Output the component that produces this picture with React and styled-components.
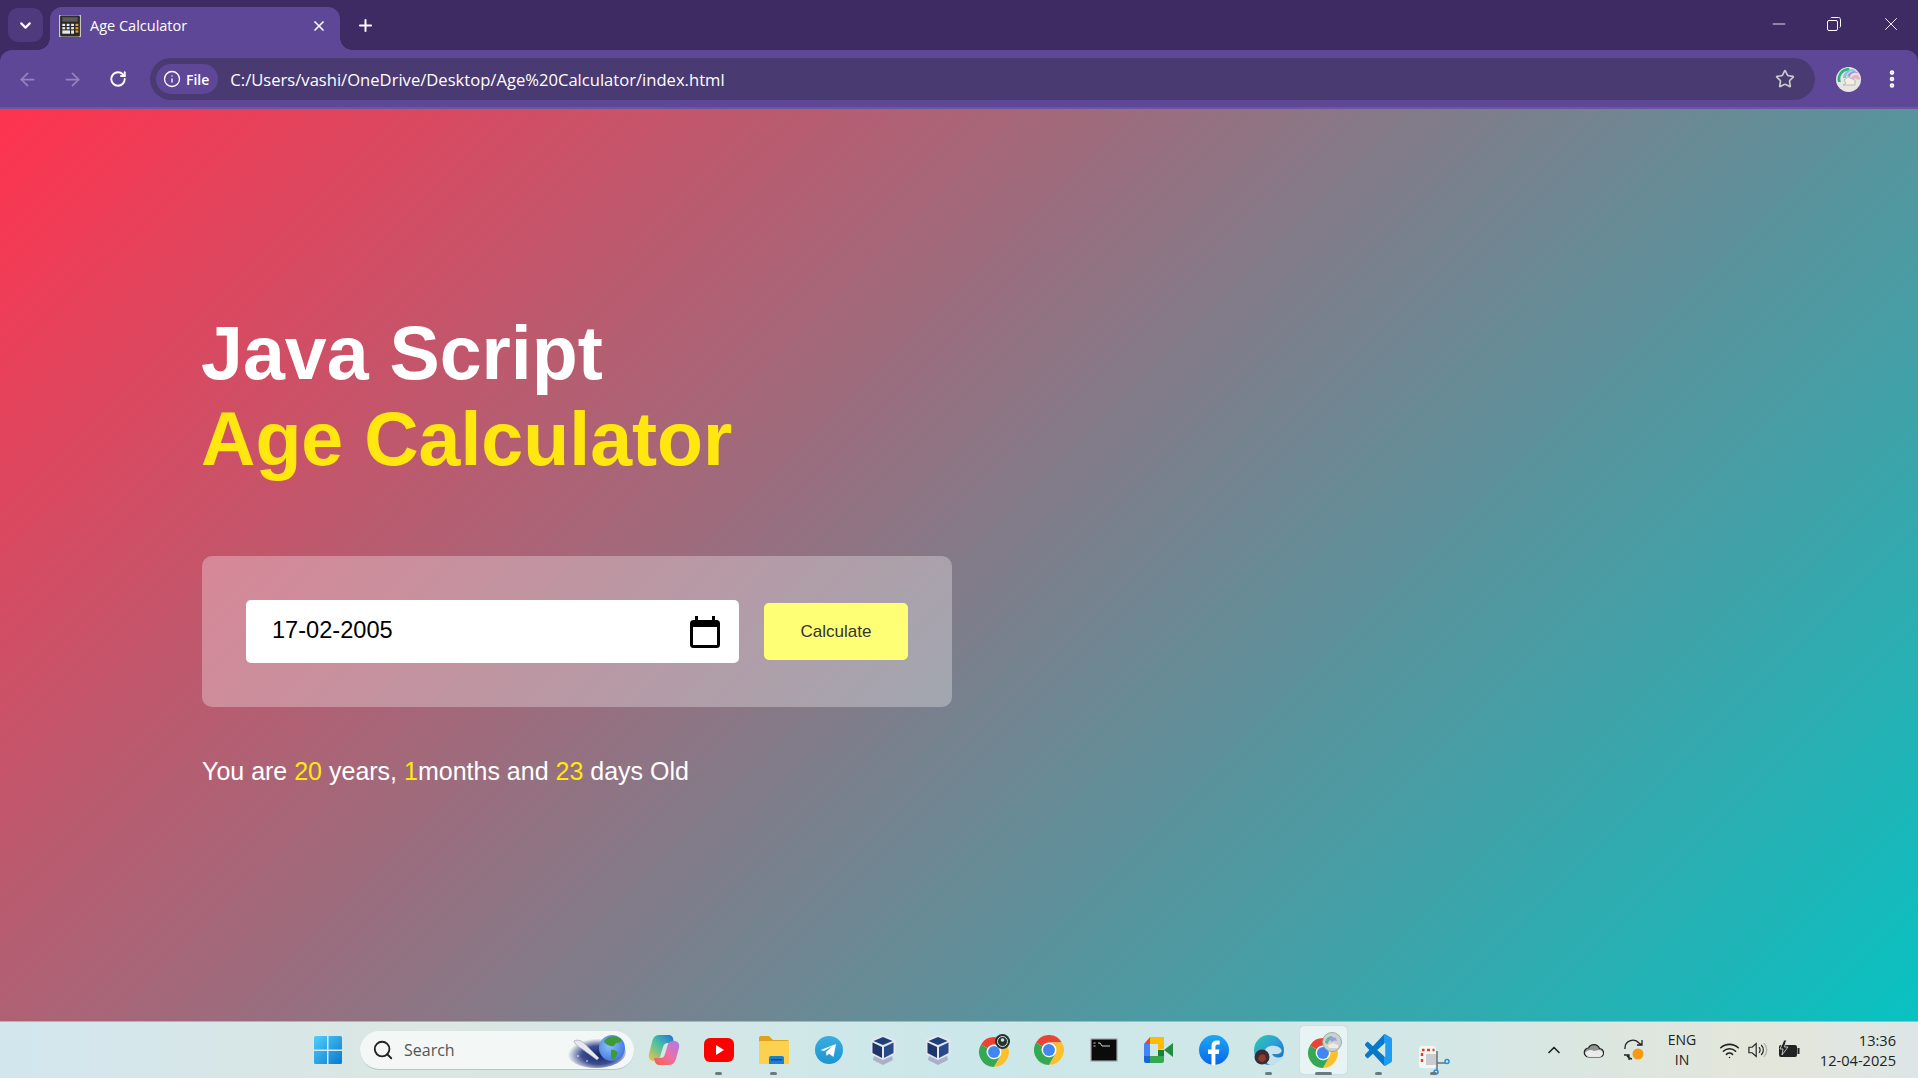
import styled, { createGlobalStyle } from "styled-components";
import {
  ArrowLeft,
  ArrowRight,
  ChevronDown,
  ChevronUp,
  EllipsisVertical,
  Info,
  Minus,
  Plus,
  RotateCw,
  Search,
  Star,
  Wifi,
  X,
} from "lucide-react";

const frame = "#3e2b63";
const toolbar = "#5f4798";

const GlobalStyle = createGlobalStyle`
  html, body {
    margin: 0;
    padding: 0;
    height: 100%;
    overflow: hidden;
  }
  * {
    box-sizing: border-box;
  }
`;

const Screen = styled.div`
  display: flex;
  flex-direction: column;
  height: 100vh;
  background: ${frame};
  font-family: "Liberation Sans", Arial, sans-serif;
`;

const TabStrip = styled.div`
  display: flex;
  align-items: flex-end;
  height: 50px;
  flex-shrink: 0;
  color: #fff;
  font-family: "Open Sans", "Noto Sans", sans-serif;
`;

const TabSearch = styled.div`
  display: flex;
  align-items: center;
  justify-content: center;
  width: 35px;
  height: 34px;
  margin: 0 7px 8px 8px;
  border-radius: 10px;
  background: #4f3a7e;
`;

const Tab = styled.div`
  position: relative;
  display: flex;
  align-items: center;
  width: 290px;
  height: 43px;
  padding: 0 13px 6px 9px;
  border-radius: 12px 12px 0 0;
  background: ${toolbar};
  font-size: 14.5px;

  &::before,
  &::after {
    content: "";
    position: absolute;
    bottom: 0;
    width: 12px;
    height: 12px;
  }
  &::before {
    left: -12px;
    background: radial-gradient(circle at 0 0, transparent 11.5px, ${toolbar} 12px);
  }
  &::after {
    right: -12px;
    background: radial-gradient(circle at 100% 0, transparent 11.5px, ${toolbar} 12px);
  }
`;

const TabTitle = styled.span`
  flex: 1;
  margin-left: 9px;
`;

const NewTab = styled.div`
  display: flex;
  align-items: center;
  margin: 0 0 10px 16px;
  height: 30px;
`;

const WindowControls = styled.div`
  display: flex;
  align-items: center;
  margin-left: auto;
  height: 50px;
  padding-bottom: 2px;
`;

const WindowButton = styled.div`
  display: flex;
  align-items: center;
  justify-content: center;
  width: ${(p) => p.$w}px;
`;

const Toolbar = styled.div`
  display: flex;
  align-items: center;
  height: 59px;
  flex-shrink: 0;
  padding: 1px 0 0;
  background: ${toolbar};
  border-bottom: 2px solid #6b569f;
  border-radius: 12px 12px 0 0;
  color: #fff;
  font-family: "Open Sans", "Noto Sans", sans-serif;
`;

const NavButton = styled.div`
  display: flex;
  align-items: center;
  justify-content: center;
  width: ${(p) => p.$w}px;
  color: ${(p) => (p.$dim ? "#9384bb" : "#fff")};
`;

const Omnibox = styled.div`
  display: flex;
  align-items: center;
  width: 1665px;
  height: 42px;
  margin-left: 4px;
  padding: 0 20px 0 6px;
  border-radius: 21px;
  background: #4a3a72;
  font-size: 16.6px;
`;

const SiteChip = styled.div`
  display: flex;
  align-items: center;
  gap: 5px;
  height: 30px;
  padding: 0 9px 0 7px;
  border-radius: 15px;
  background: ${toolbar};
  font-size: 14px;
  font-weight: 600;
`;

const Url = styled.span`
  flex: 1;
  margin-left: 12px;
`;

const Avatar = styled.div`
  display: flex;
  margin-left: 21px;
  width: 25px;
  height: 25px;
`;

const Menu = styled.div`
  display: flex;
  margin-left: 20px;
`;

const Page = styled.main`
  flex: 1;
  padding: 201px 0 0 202px;
  background: linear-gradient(135deg, #ff334f, #08c2c2);
`;

const Heading = styled.h1`
  margin: 0 0 74px -1px;
  font-size: 75.3px;
  line-height: 86px;
  font-weight: 700;
  color: #fff;
`;

const HeadingAccent = styled.span`
  display: block;
  color: #ffe70f;
`;

const Card = styled.div`
  display: flex;
  align-items: center;
  justify-content: space-between;
  width: 750px;
  height: 151px;
  padding: 0 44px;
  border-radius: 10px;
  background: rgba(255, 255, 255, 0.3);
`;

const DateField = styled.div`
  display: flex;
  align-items: center;
  width: 493px;
  height: 63px;
  padding: 0 19px 0 26px;
  border-radius: 5px;
  background: #fff;
`;

const DateInput = styled.input`
  flex: 1;
  min-width: 0;
  border: 0;
  outline: 0;
  padding: 0 0 3px;
  background: transparent;
  color: #000;
  font-family: inherit;
  font-size: 23.6px;
`;

const CalcButton = styled.button`
  width: 144px;
  height: 57px;
  border: 0;
  border-radius: 5px;
  background: #ffff76;
  color: #333;
  font-family: inherit;
  font-size: 17px;
`;

const Result = styled.p`
  margin: 49px 0 0;
  font-size: 25px;
  line-height: 30px;
  color: #fff;
`;

const Num = styled.span`
  color: #ffe70f;
`;

const Taskbar = styled.footer`
  display: flex;
  align-items: center;
  height: 57px;
  flex-shrink: 0;
  padding-left: 300px;
  border-top: 1px solid #a9b6b8;
  background: linear-gradient(90deg, #d2e6ee 0%, #dbe7e2 22%, #cce7ea 50%, #d3e7e6 75%, #e4e6da 92%, #dde6e6 100%);
`;

const TaskItem = styled.div`
  position: relative;
  display: flex;
  align-items: center;
  justify-content: center;
  width: 55px;
  height: 48px;

  ${(p) =>
    p.$active &&
    `
    &::before {
      content: "";
      position: absolute;
      left: 4px;
      right: 4px;
      top: 0;
      bottom: 0;
      border-radius: 4px;
      background: rgba(255, 255, 255, 0.5);
      box-shadow: 0 0 1px rgba(0, 0, 0, 0.25);
    }
  `}

  svg {
    position: relative;
  }
`;

const Indicator = styled.span`
  position: absolute;
  left: 50%;
  bottom: -1px;
  width: ${(p) => (p.$active ? 17 : 7)}px;
  height: 3px;
  margin-left: ${(p) => (p.$active ? -8.5 : -3.5)}px;
  border-radius: 2px;
  background: #6b7a82;
`;

const SearchBox = styled.div`
  display: flex;
  align-items: center;
  width: 274px;
  height: 39px;
  margin: 0 2px 0 5px;
  padding: 0 4px 0 12px;
  border-radius: 20px;
  border-bottom: 1px solid #b9c4c4;
  background: #f3f7f5;
  color: #555;
  font-family: "Open Sans", "Noto Sans", sans-serif;
  font-size: 16px;
`;

const SearchLabel = styled.span`
  flex: 1;
  margin-left: 10px;
`;

const Tray = styled.div`
  display: flex;
  align-items: center;
  margin-left: auto;
  padding-right: 22px;
  color: #222;
  font-family: "Open Sans", "Noto Sans", sans-serif;
  font-size: 14px;
`;

const TrayBox = styled.div`
  display: flex;
  align-items: center;
  justify-content: center;
  width: ${(p) => p.$w}px;
`;

const Lang = styled.div`
  width: 56px;
  text-align: center;
  line-height: 20px;
`;

const Clock = styled.div`
  width: 86px;
  text-align: right;
  font-size: 14.6px;
  line-height: 20px;
  white-space: nowrap;
`;

const CalculatorFavicon = () => (
  <svg width="22" height="22" viewBox="0 0 20 20">
    <rect width="20" height="20" fill="#c9c5c0" />
    <rect x="1" y="0.5" width="18" height="19" rx="1" fill="#2a2a2a" />
    <rect x="3" y="2" width="14" height="4" fill="#5b5b5b" />
    {[3, 7, 11].map((x) =>
      [8, 11].map((y) => <rect key={`${x}-${y}`} x={x} y={y} width="2.6" height="2" fill="#e8e8e8" />)
    )}
    <rect x="3" y="14" width="7" height="3" fill="#e8e8e8" />
    <rect x="11" y="14" width="2.6" height="3" fill="#e8e8e8" />
    {[8, 11, 14].map((y) => (
      <rect key={y} x="15" y={y} width="2.6" height="2" fill="#f09a1a" />
    ))}
  </svg>
);

const CalendarIcon = () => (
  <svg width="30" height="32" viewBox="0 0 30 32">
    <path d="M5 0h3v4h14V0h3v4h1.500a3.500 3.500 0 0 1 3.500 3.500v21a3.500 3.500 0 0 1-3.500 3.500h-23A3.500 3.500 0 0 1 0 28.500v-21A3.500 3.500 0 0 1 3.500 4H5z" fill="#000" />
    <rect x="3" y="11" width="24" height="18" fill="#fff" />
  </svg>
);

const RestoreIcon = () => (
  <svg width="14" height="14" viewBox="0 0 14 14" fill="none" stroke="#fff" strokeWidth="1">
    <rect x="0.500" y="3.500" width="10" height="10" rx="1.500" />
    <path d="M3.500 1.200c.3-.5.7-.7 1.200-.7h6.800c1.100 0 2 .9 2 2v6.800c0 .5-.2.900-.7 1.200" />
  </svg>
);

const ProfileAvatar = ({ size = 25 }) => (
  <svg width={size} height={size} viewBox="0 0 25 25">
    <circle cx="12.500" cy="12.500" r="12.500" fill="#e8e6e2" />
    <path d="M2 15A11 11 0 0 1 13 1l1 3A8 8 0 0 0 5 15z" fill="#2fb57c" />
    <path d="M7 11A9 9 0 0 1 18 2.500l2 2A7 7 0 0 0 10 11z" fill="#83c4e0" />
    <path d="M11 9A7 7 0 0 1 21 5l2 3a5 5 0 0 0-9 2z" fill="#a59ade" />
    <path d="M15 11a5 5 0 0 1 8-2l1.500 3.500H21a3 3 0 0 0-5 1z" fill="#e5b5c4" />
    <path d="M8 13l4-3 7 3v5H7l3-2z" fill="#f3efe6" stroke="#a8a49c" strokeWidth="0.700" />
  </svg>
);

const WindowsIcon = () => (
  <svg width="30" height="30" viewBox="0 0 30 30">
    <defs>
      <linearGradient id="win" x1="0" y1="0" x2="1" y2="1">
        <stop offset="0" stopColor="#4fd0fb" />
        <stop offset="1" stopColor="#0a78cf" />
      </linearGradient>
    </defs>
    <path d="M1 2.500A1.500 1.500 0 0 1 2.500 1H14v13.500H1zM15.500 1H27.500A1.500 1.500 0 0 1 29 2.500V14.500H15.500zM1 16H14v13H2.500A1.500 1.500 0 0 1 1 27.500zM15.500 16H29v11.500a1.500 1.500 0 0 1-1.500 1.500H15.500z" fill="url(#win)" />
  </svg>
);

const SpaceBadge = () => (
  <svg width="64" height="36" viewBox="0 0 64 36">
    <defs>
      <radialGradient id="space" cx="0.550" cy="0.600" r="0.520">
        <stop offset="0" stopColor="#16286a" />
        <stop offset="0.550" stopColor="#3c4c90" />
        <stop offset="1" stopColor="#f3f7f5" />
      </radialGradient>
      <radialGradient id="globe" cx="0.400" cy="0.400" r="0.700">
        <stop offset="0" stopColor="#8cc4f8" />
        <stop offset="1" stopColor="#3b6fe0" />
      </radialGradient>
    </defs>
    <ellipse cx="30" cy="20" rx="30" ry="16" fill="url(#space)" />
    <path d="M8 9c4-2 8 0 11 3l14 14-2 2-15-11c-4-2-7-5-8-8z" fill="#e6e8ee" stroke="#8f96ad" strokeWidth="0.600" />
    <circle cx="12" cy="24" r="0.800" fill="#fff" />
    <circle cx="21" cy="29" r="0.800" fill="#fff" />
    <circle cx="46" cy="16" r="13" fill="url(#globe)" />
    <path d="M41 6c4-3 11-2 14 1 1 3-2 4-5 4l-2 3c-3 1-7-1-9-3s0-3 2-5zM45 18c3-1 6 1 7 3l-4 7c-2 0-3-2-3-5z" fill="#3f9a3a" />
  </svg>
);

const CopilotIcon = () => (
  <svg width="32" height="32" viewBox="0 0 32 32">
    <defs>
      <linearGradient id="cpA" x1="0" y1="1" x2="1" y2="0">
        <stop offset="0" stopColor="#f5c343" />
        <stop offset="0.500" stopColor="#4cc2a0" />
        <stop offset="1" stopColor="#1f6fe0" />
      </linearGradient>
      <linearGradient id="cpB" x1="0" y1="1" x2="1" y2="0">
        <stop offset="0" stopColor="#f4613f" />
        <stop offset="0.500" stopColor="#ee6fa8" />
        <stop offset="1" stopColor="#a77ce8" />
      </linearGradient>
    </defs>
    <path d="M11 1h10c2 0 3 1 4 3l1 5h-6c-3 0-4 1-5 4l-3 10c-1 3-3 4-6 4-4 0-6-3-5-7l3-12C5 4 7 1 11 1z" fill="url(#cpA)" />
    <path d="M21 31H11c-2 0-3-1-4-3l-1-4h6c3 0 4-1 5-4l3-10c1-2 3-3 6-3 4 0 6 3 5 7l-3 11c-1 3-3 6-7 6z" fill="url(#cpB)" />
  </svg>
);

const YoutubeIcon = () => (
  <svg width="30" height="24" viewBox="0 0 30 24">
    <rect width="30" height="24" rx="6" fill="#f00" />
    <path d="M12 7l8 5-8 5z" fill="#fff" />
  </svg>
);

const FolderIcon = () => (
  <svg width="30" height="28" viewBox="0 0 30 28">
    <path d="M0 2a2 2 0 0 1 2-2h8l4 4h14a2 2 0 0 1 2 2v4H0z" fill="#dfa21c" />
    <rect y="5" width="30" height="23" rx="1" fill="#fdd04f" />
    <path d="M10 25v-3a2 2 0 0 1 2-2h11a2 2 0 0 1 2 2v6H10z" fill="#1b80cf" />
    <rect x="12" y="23" width="11" height="1.500" fill="#0c4f92" />
  </svg>
);

const TelegramIcon = () => (
  <svg width="28" height="28" viewBox="0 0 28 28">
    <defs>
      <linearGradient id="tg" x1="0" y1="0" x2="0" y2="1">
        <stop offset="0" stopColor="#3aaee2" />
        <stop offset="1" stopColor="#1e94d0" />
      </linearGradient>
    </defs>
    <circle cx="14" cy="14" r="14" fill="url(#tg)" />
    <path d="M5.500 14L21 8l-2.500 13-4.500-3.300-2.400 2.300-.6-4 6.500-6-8.400 5z" fill="#fff" />
  </svg>
);

const VBoxIcon = () => (
  <svg width="26" height="30" viewBox="1 0 26 30">
    <path d="M13 0l12.500 5v14L13 25 .5 19V5z" fill="#e4e8ee" />
    <path d="M13 2l9.500 4-9.500 4-9.500-4z" fill="#1f3f78" />
    <path d="M2.500 7.500l9.500 4.500v11l-9.500-5z" fill="#1d3567" />
    <path d="M23.500 7.500L14 12v11l9.500-5z" fill="#264a8c" />
    <path d="M4 21l9 4 9-4 1 4-10 5-10-5z" fill="#a9b1c9" />
  </svg>
);

const ChromeGlyph = () => (
  <g transform="scale(1.360) translate(-1 -1)">
    <circle cx="12" cy="12" r="11" fill="#fff" />
    <path d="M21.530 6.500A11 11 0 0 0 2.470 6.500L7.240 9.250A5.500 5.500 0 0 1 12 6.500Z" fill="#ea4335" />
    <path d="M12 23A11 11 0 0 0 21.530 6.500H12A5.500 5.500 0 0 1 16.760 14.750Z" fill="#fbc02d" />
    <path d="M2.470 6.500A11 11 0 0 0 12 23L16.760 14.750A5.500 5.500 0 0 1 7.240 9.250Z" fill="#34a853" />
    <circle cx="12" cy="12" r="4.400" fill="#4285f4" />
  </g>
);

const ChromeIcon = () => (
  <svg width="30" height="30" viewBox="0 0 30 30">
    <ChromeGlyph />
  </svg>
);

const ProfileBadge = () => (
  <svg width="34" height="34" viewBox="0 0 34 34">
    <g transform="translate(2 4)">
      <ChromeGlyph />
    </g>
    <circle cx="25.500" cy="8.500" r="7.500" fill="#26332f" />
    <circle cx="25.500" cy="8.500" r="5" fill="none" stroke="#d5e3df" strokeWidth="1" />
    <circle cx="25.500" cy="7" r="1.800" fill="#d5e3df" />
  </svg>
);

const ActiveChrome = () => (
  <svg width="38" height="38" viewBox="0 0 38 38">
    <g transform="translate(3 7)">
      <ChromeGlyph />
    </g>
    <circle cx="27" cy="11" r="9.500" fill="#c9d3d0" stroke="#8f9a98" strokeWidth="0.800" />
    <path d="M20 12a7 7 0 0 1 7-7l1 3a5 5 0 0 0-5 5z" fill="#66b99a" />
    <path d="M24 8a6 6 0 0 1 7-1l1 3a4 4 0 0 0-5 1z" fill="#a59ade" />
    <path d="M23 14l5-2 5 2v3h-9z" fill="#efece5" />
  </svg>
);

const TerminalIcon = () => (
  <svg width="28" height="24" viewBox="0 0 28 24">
    <rect width="28" height="24" rx="1" fill="#b6bcc0" />
    <rect x="1.500" y="1.500" width="25" height="21" fill="#0b0b0b" />
    <path d="M3.500 5h2M3.500 8h2M8 5h2l2 3h8" stroke="#cfd3d6" strokeWidth="1" fill="none" />
  </svg>
);

const MeetIcon = () => (
  <svg width="29" height="26" viewBox="0 0 29 26">
    <path d="M6 0h14v7h-14z" fill="#fbbc04" />
    <path d="M6 0v7H0z" fill="#ea4335" />
    <path d="M0 7h6v12H0z" fill="#4285f4" />
    <path d="M0 19h6v7H2a2 2 0 0 1-2-2z" fill="#1967d2" />
    <path d="M6 19h14v5a2 2 0 0 1-2 2H6z" fill="#34a853" />
    <path d="M14 7h6v5l-6 1z" fill="#fbbc04" />
    <path d="M20 13l9-7v14z" fill="#1e8e3e" />
    <path d="M14 13h6v6h-6z" fill="#188038" />
  </svg>
);

const FacebookIcon = () => (
  <svg width="30" height="30" viewBox="0 0 30 30">
    <defs>
      <linearGradient id="fb" x1="0" y1="0" x2="0" y2="1">
        <stop offset="0" stopColor="#1aa9f6" />
        <stop offset="1" stopColor="#0a66e6" />
      </linearGradient>
    </defs>
    <circle cx="15" cy="15" r="15" fill="url(#fb)" />
    <path d="M12.500 30V19H9v-4.500h3.500V11c0-3.700 2.200-5.500 5.400-5.500 1.500 0 2.800.2 2.800.2v3.800h-1.900c-1.800 0-2.400 1.100-2.400 2.300v2.700h4l-.7 4.500h-3.300v11z" fill="#fff" />
  </svg>
);

const EdgeIcon = () => (
  <svg width="30" height="30" viewBox="0 0 30 30">
    <defs>
      <linearGradient id="edge" x1="0" y1="0" x2="1" y2="1">
        <stop offset="0" stopColor="#2fc9a5" />
        <stop offset="0.500" stopColor="#2a9fdc" />
        <stop offset="1" stopColor="#1a5fb4" />
      </linearGradient>
    </defs>
    <circle cx="15" cy="15" r="15" fill="url(#edge)" />
    <path d="M11 15c2-5 12-6 16-1 2 3-1 5-4 5h-5c1 3 6 5 11 2-2 5-7 9-12 9-2 0-3-1-4-2-3-3-3-9-2-13z" fill="#cfe7ea" opacity="0.950" />
    <circle cx="8" cy="22" r="7.500" fill="#3a2c36" />
    <path d="M4 24c1-4 4-6 7-4l1 4c-2 4-6 4-8 0z" fill="#8c3b2c" />
  </svg>
);

const VscodeIcon = () => (
  <svg width="27" height="32" viewBox="0 0 24 24" preserveAspectRatio="none">
    <defs>
      <linearGradient id="vs" x1="0" y1="0" x2="1" y2="0">
        <stop offset="0.700" stopColor="#0a78c8" />
        <stop offset="0.720" stopColor="#1f9cf0" />
      </linearGradient>
    </defs>
    <path
      d="M23.150 2.587L18.210.21a1.494 1.494 0 0 0-1.705.29l-9.460 8.630-4.120-3.128a.999.999 0 0 0-1.276.057L.327 7.261A1 1 0 0 0 .326 8.740L3.899 12 .326 15.260a1 1 0 0 0 .001 1.479L1.650 17.940a.999.999 0 0 0 1.276.057l4.120-3.128 9.460 8.630a1.492 1.492 0 0 0 1.704.29l4.942-2.377A1.500 1.500 0 0 0 24 20.060V3.939a1.500 1.500 0 0 0-.850-1.352zm-5.146 14.861L10.826 12l7.178-5.448v10.896z"
      fill="url(#vs)"
    />
  </svg>
);

const SnipIcon = () => (
  <svg width="32" height="50" viewBox="0 0 32 50">
    <rect x="1" y="21" width="17" height="22" rx="3" fill="#f4f6f5" />
    <path d="M4 25h2.500M9 25h3M4 28v3M4 34v3M14.500 25h2" stroke="#e2401f" strokeWidth="2.400" fill="none" />
    <rect x="8" y="29" width="11" height="11" fill="#c9cdd0" />
    <path d="M19 26v20M19 38h9" stroke="#6b7378" strokeWidth="1.500" />
    <circle cx="29" cy="36.500" r="2" fill="none" stroke="#1f8fe0" strokeWidth="1.500" />
    <circle cx="18" cy="47" r="2" fill="none" stroke="#1f8fe0" strokeWidth="1.500" />
  </svg>
);

const CloudIcon = () => (
  <svg width="22" height="16" viewBox="0 0 22 16">
    <path d="M6 15a4.500 4.500 0 0 1-.5-9A6 6 0 0 1 16.500 6.500 4.300 4.300 0 0 1 17 15z" fill="#8e9492" stroke="#222" strokeWidth="1.200" />
    <path d="M2 11c2-3 6-4 9-2l5-1c2 0 4 2 4 4-1 2-2 3-3 3H6c-2 0-3-2-4-4z" fill="#f3f5f4" stroke="none" opacity="0.900" />
  </svg>
);

const SyncIcon = () => (
  <svg width="22" height="24" viewBox="0 0 22 24" fill="none" stroke="#222" strokeWidth="1.300">
    <path d="M2 11A8 8 0 0 1 16 5l3 2M19 2v5h-5" />
    <path d="M9 21A8 8 0 0 1 4 18M1 17h5v5" />
    <circle cx="15" cy="16" r="5.500" fill="#f79a12" stroke="none" />
  </svg>
);

const VolumeIcon = () => (
  <svg width="22" height="20" viewBox="0 0 22 20" fill="none" stroke="#222" strokeWidth="1.300">
    <path d="M1 7v6h3.500L9 17V3L4.500 7z" />
    <path d="M12 7a4 4 0 0 1 0 6M14.500 4.500a7.500 7.500 0 0 1 0 11" />
    <path d="M17.500 2.500a10.500 10.500 0 0 1 0 15" stroke="#a9b0ad" />
  </svg>
);

const BatteryIcon = () => (
  <svg width="22" height="20" viewBox="0 0 22 20">
    <rect x="1" y="5" width="18" height="12" rx="2" fill="#222" />
    <rect x="19.500" y="8" width="2" height="6" fill="#222" />
    <path d="M6 0L2 9h3l-1 6 6-8H6.500l2-7z" fill="#222" stroke="#dfe6e0" strokeWidth="0.800" />
  </svg>
);

const taskIcons = [
  { icon: <CopilotIcon /> },
  { icon: <YoutubeIcon />, open: true },
  { icon: <FolderIcon />, open: true },
  { icon: <TelegramIcon /> },
  { icon: <VBoxIcon /> },
  { icon: <VBoxIcon /> },
  { icon: <ProfileBadge /> },
  { icon: <ChromeIcon /> },
  { icon: <TerminalIcon /> },
  { icon: <MeetIcon /> },
  { icon: <FacebookIcon /> },
  { icon: <EdgeIcon />, open: true },
  { icon: <ActiveChrome />, open: true, active: true },
  { icon: <VscodeIcon />, open: true },
  { icon: <SnipIcon />, open: true },
];

const App = () => {
  return (
    <Screen>
      <GlobalStyle />
      <TabStrip>
        <TabSearch>
          <ChevronDown size={17} strokeWidth={3} />
        </TabSearch>
        <Tab>
          <CalculatorFavicon />
          <TabTitle>Age Calculator</TabTitle>
          <X size={16} strokeWidth={2.5} />
        </Tab>
        <NewTab>
          <Plus size={19} strokeWidth={2.5} />
        </NewTab>
        <WindowControls>
          <WindowButton $w={50}>
            <Minus size={20} strokeWidth={1} />
          </WindowButton>
          <WindowButton $w={60}>
            <RestoreIcon />
          </WindowButton>
          <WindowButton $w={54}>
            <X size={22} strokeWidth={1} />
          </WindowButton>
        </WindowControls>
      </TabStrip>

      <Toolbar>
        <NavButton $dim $w={54}>
          <ArrowLeft size={21} strokeWidth={2} />
        </NavButton>
        <NavButton $dim $w={36}>
          <ArrowRight size={21} strokeWidth={2} />
        </NavButton>
        <NavButton $w={56}>
          <RotateCw size={18} strokeWidth={2.5} />
        </NavButton>
        <Omnibox>
          <SiteChip>
            <Info size={18} strokeWidth={1.75} />
            File
          </SiteChip>
          <Url>C:/Users/vashi/OneDrive/Desktop/Age%20Calculator/index.html</Url>
          <Star size={20} strokeWidth={2} color="#c9c9c9" />
        </Omnibox>
        <Avatar>
          <ProfileAvatar />
        </Avatar>
        <Menu>
          <EllipsisVertical size={22} strokeWidth={3} />
        </Menu>
      </Toolbar>

      <Page>
        <Heading>
          Java Script
          <HeadingAccent>Age Calculator</HeadingAccent>
        </Heading>
        <Card>
          <DateField>
            <DateInput type="text" defaultValue="17-02-2005" />
            <CalendarIcon />
          </DateField>
          <CalcButton>Calculate</CalcButton>
        </Card>
        <Result>
          You are <Num>20</Num> years, <Num>1</Num>months and <Num>23</Num> days Old
        </Result>
      </Page>

      <Taskbar>
        <TaskItem>
          <WindowsIcon />
        </TaskItem>
        <SearchBox>
          <Search size={22} strokeWidth={2} color="#222" />
          <SearchLabel>Search</SearchLabel>
          <SpaceBadge />
        </SearchBox>
        {taskIcons.map((item, index) => (
          <TaskItem key={index} $active={item.active}>
            {item.icon}
            {item.open && <Indicator $active={item.active} />}
          </TaskItem>
        ))}
        <Tray>
          <TrayBox $w={40}>
            <ChevronUp size={20} strokeWidth={2} />
          </TrayBox>
          <TrayBox $w={40}>
            <CloudIcon />
          </TrayBox>
          <TrayBox $w={40}>
            <SyncIcon />
          </TrayBox>
          <Lang>
            ENG
            <br />
            IN
          </Lang>
          <TrayBox $w={38}>
            <Wifi size={21} strokeWidth={1.75} />
          </TrayBox>
          <TrayBox $w={20}>
            <VolumeIcon />
          </TrayBox>
          <TrayBox $w={42}>
            <BatteryIcon />
          </TrayBox>
          <Clock>
            13:36
            <br />
            12-04-2025
          </Clock>
        </Tray>
      </Taskbar>
    </Screen>
  );
};

export default App;
